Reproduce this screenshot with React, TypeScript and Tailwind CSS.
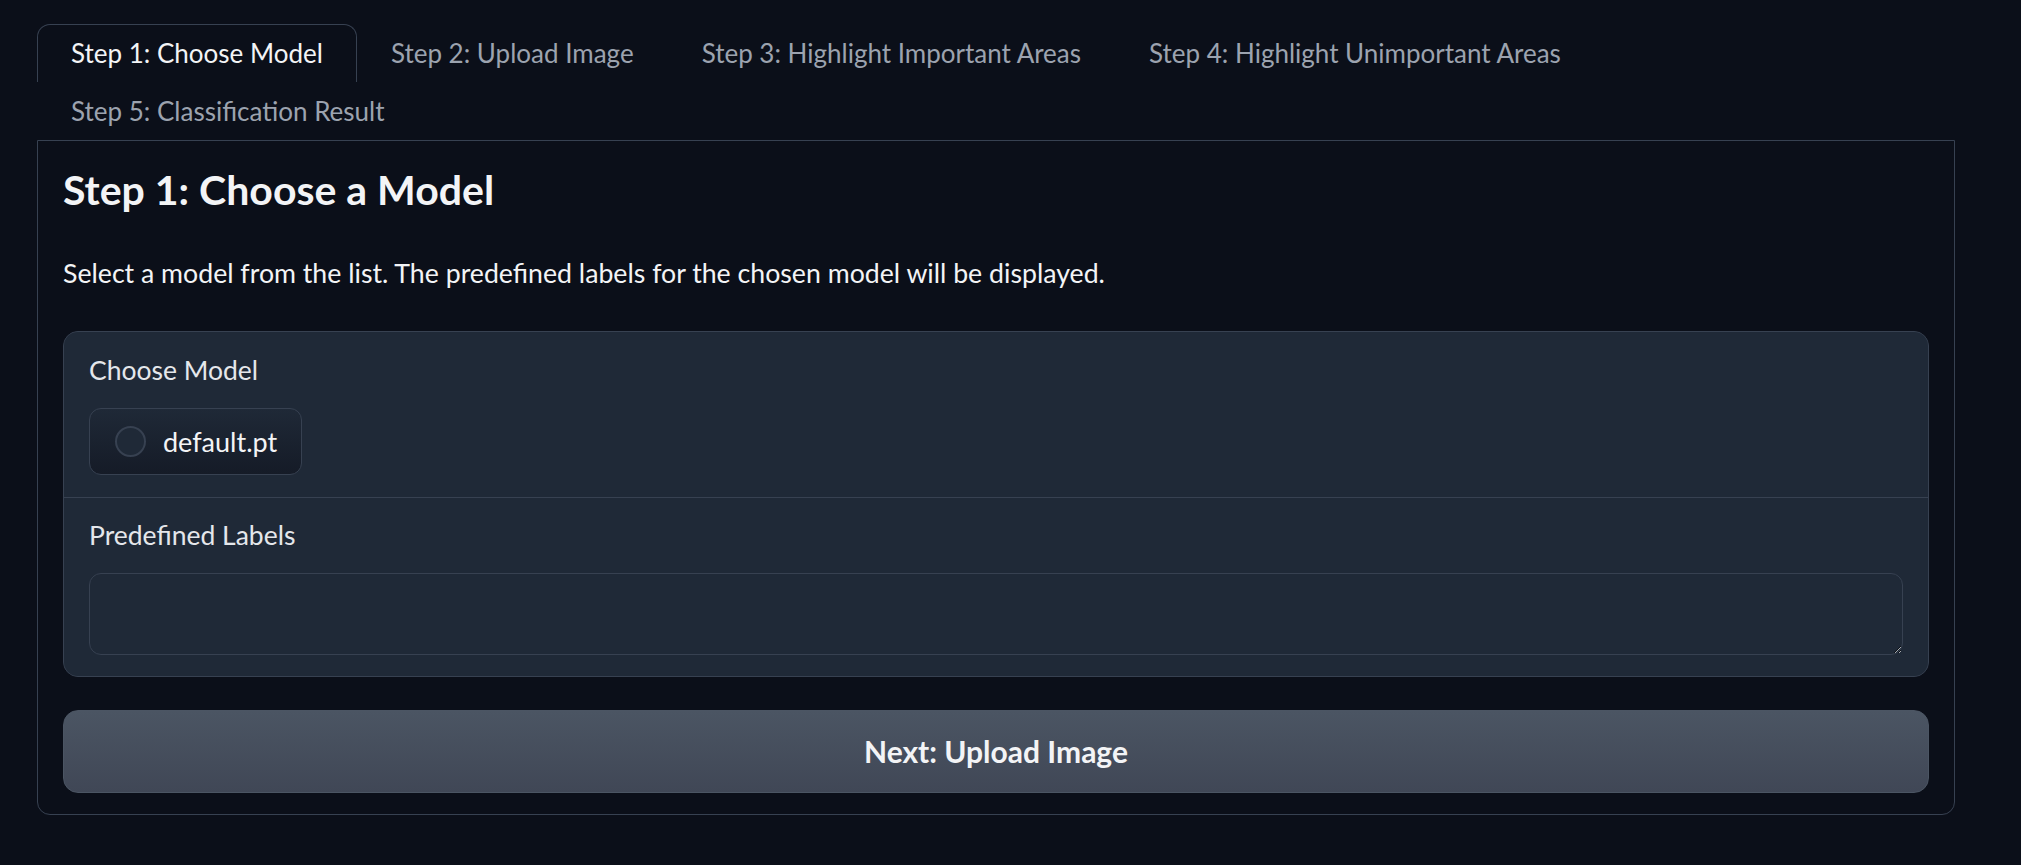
import React, { useState } from 'react';

const TABS = [
  'Step 1: Choose Model',
  'Step 2: Upload Image',
  'Step 3: Highlight Important Areas',
  'Step 4: Highlight Unimportant Areas',
  'Step 5: Classification Result',
];

export default function App() {
  const [tab, setTab] = useState(0);
  const [model, setModel] = useState<string | null>(null);

  return (
    <div className="min-h-screen bg-[#0b0f19] pl-[37px] pr-[66px] pt-[24px] font-['Lato','Noto_Sans',sans-serif] text-[#f3f4f6]">
      {/* tab nav */}
      <div className="flex flex-wrap">
        {TABS.map((t, i) => (
          <button
            key={t}
            onClick={() => setTab(i)}
            className={
              'h-[58px] px-[33px] text-[26px] leading-[31px] cursor-pointer rounded-t-[13px] border border-b-0 ' +
              (tab === i
                ? 'border-[#374151] text-[#f3f4f6]'
                : 'border-transparent text-[#9ca3af] hover:text-[#d1d5db]')
            }
          >
            {t}
          </button>
        ))}
      </div>

      {/* panel */}
      <div className="border border-[#374151] rounded-b-[13px] px-[25px] pt-[25px] pb-[21px]">
        <h2 className="text-[41px] leading-[48px] font-bold text-[#f3f4f6]">Step 1: Choose a Model</h2>
        <p className="mt-[44px] text-[26.7px] leading-[31px] text-[#f3f4f6]">
          Select a model from the list. The predefined labels for the chosen model will be displayed.
        </p>

        <div className="mt-[42px] rounded-[15px] border border-[#374151] bg-[#374151] overflow-hidden flex flex-col gap-px">
          <div className="bg-[#1f2937] px-[25px] pt-[23px] pb-[22px]">
            <div className="text-[26.5px] leading-[31px] text-[#e5e7eb]">Choose Model</div>
            <div className="mt-[22px] flex">
              <label
                onClick={() => setModel('default.pt')}
                className="h-[67px] w-[213px] flex items-center gap-[17px] pl-[25px] rounded-[12px] border border-[#374151] bg-gradient-to-b from-[#1f2937] to-[#151b27] cursor-pointer"
              >
                <span
                  className={
                    'w-[31px] h-[31px] rounded-full border-2 ' +
                    (model ? 'border-[#4b5563] bg-[#6366f1]' : 'border-[#374151] bg-[#1f2937]')
                  }
                />
                <span className="text-[27px] leading-[31px] text-[#f3f4f6]">default.pt</span>
              </label>
            </div>
          </div>
          <div className="bg-[#1f2937] px-[25px] pt-[22px] pb-[21px]">
            <div className="text-[26.5px] leading-[31px] text-[#e5e7eb]">Predefined Labels</div>
            <textarea
              readOnly
              className="mt-[22px] block w-full h-[82px] rounded-[12px] border border-[#374151] bg-[#1f2937] px-[16px] py-[10px] text-[24px] text-[#f3f4f6] outline-none"
            />
          </div>
        </div>

        <button className="mt-[33px] w-full h-[83px] rounded-[15px] border border-[#4b5563] bg-gradient-to-b from-[#4b5563] to-[#404756] text-[30px] font-bold text-[#f3f4f6] cursor-pointer">
          Next: Upload Image
        </button>
      </div>
    </div>
  );
}
